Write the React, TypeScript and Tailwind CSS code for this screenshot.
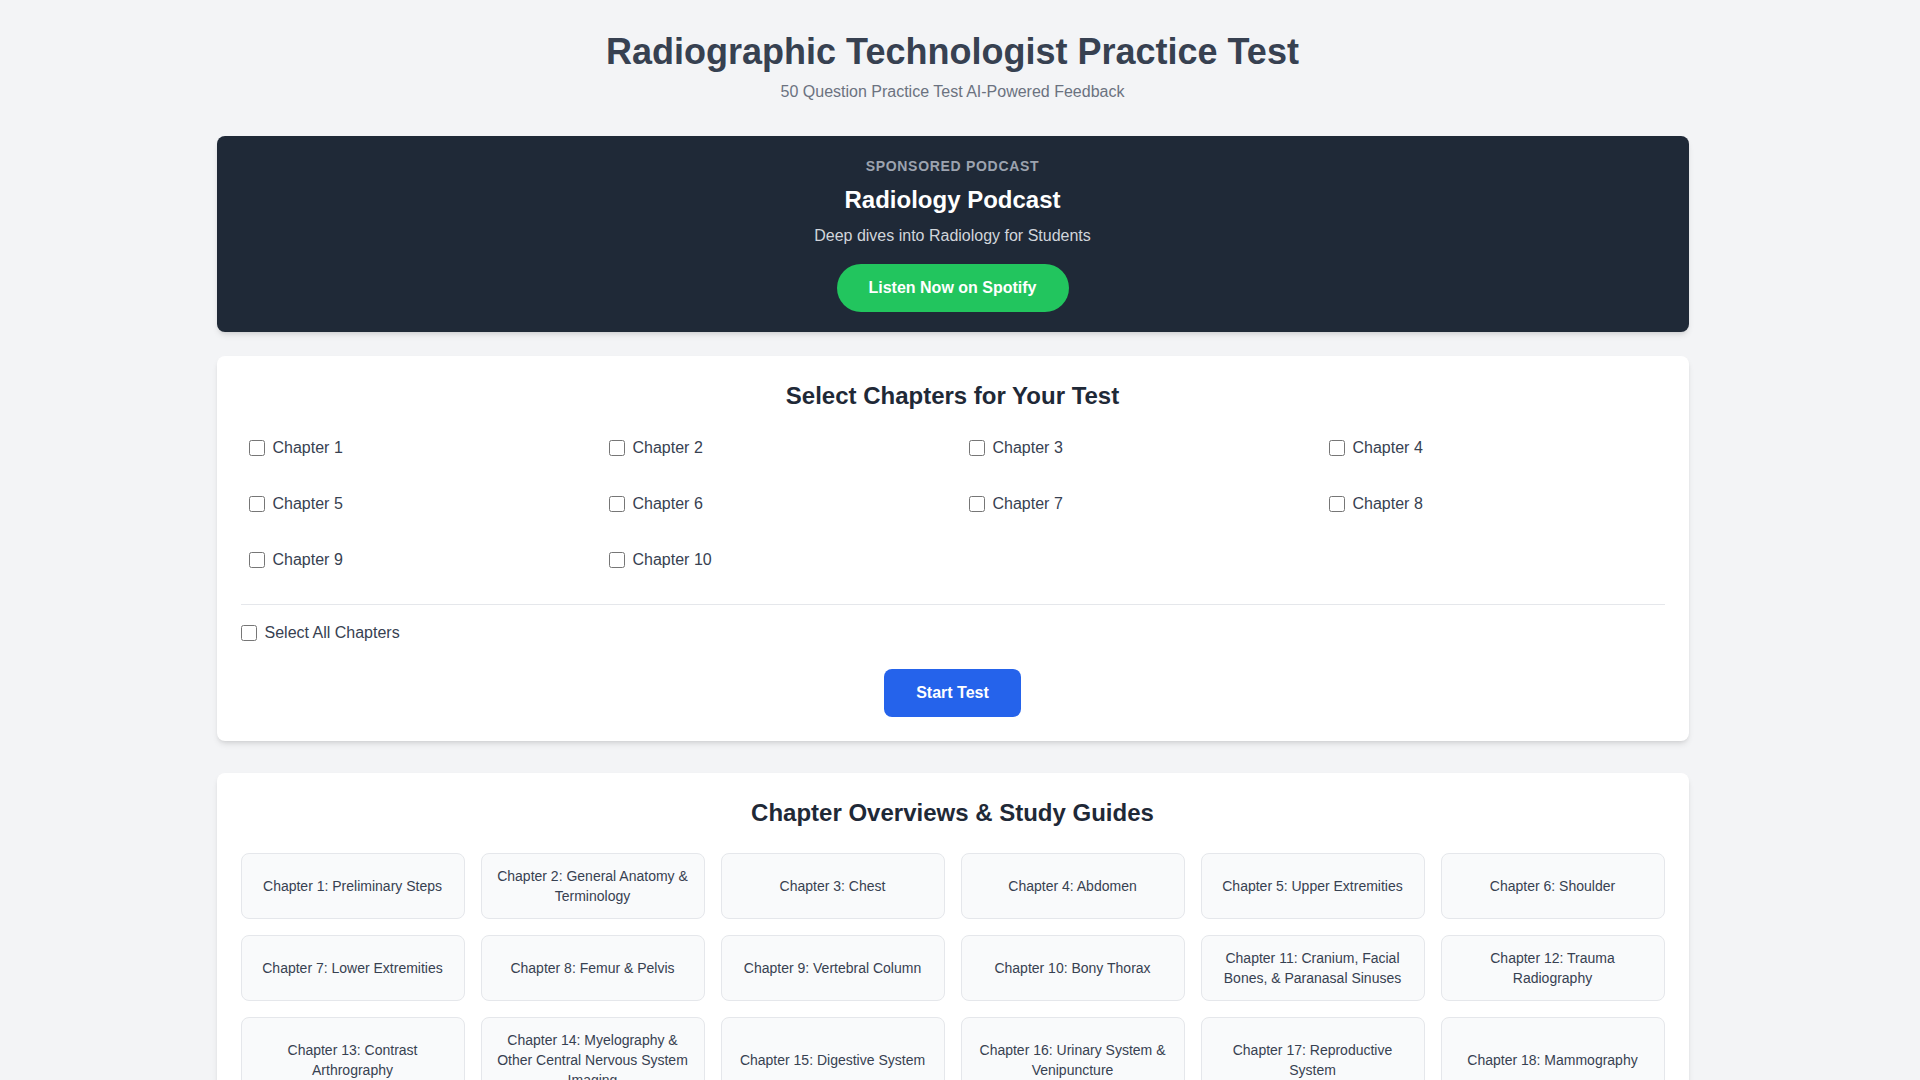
import React, { useState } from 'react';

const selectable = Array.from({ length: 10 }, (_, i) => i + 1);

const guides = [
  'Chapter 1: Preliminary Steps',
  'Chapter 2: General Anatomy & Terminology',
  'Chapter 3: Chest',
  'Chapter 4: Abdomen',
  'Chapter 5: Upper Extremities',
  'Chapter 6: Shoulder',
  'Chapter 7: Lower Extremities',
  'Chapter 8: Femur & Pelvis',
  'Chapter 9: Vertebral Column',
  'Chapter 10: Bony Thorax',
  'Chapter 11: Cranium, Facial Bones, & Paranasal Sinuses',
  'Chapter 12: Trauma Radiography',
  'Chapter 13: Contrast Arthrography',
  'Chapter 14: Myelography & Other Central Nervous System Imaging',
  'Chapter 15: Digestive System',
  'Chapter 16: Urinary System & Venipuncture',
  'Chapter 17: Reproductive System',
  'Chapter 18: Mammography',
];

export default function App() {
  const [picked, setPicked] = useState<number[]>([]);

  const toggle = (n: number) => {
    setPicked(prev => (prev.includes(n) ? prev.filter(p => p !== n) : [...prev, n]));
  };

  const allPicked = picked.length === selectable.length;

  const toggleAll = () => {
    setPicked(allPicked ? [] : [...selectable]);
  };

  return (
    <div className="h-screen overflow-y-scroll bg-[#f3f4f6] pr-[15px] font-['Liberation_Sans',Arial,sans-serif]">
      <div className="container mx-auto px-8 py-8">
        <header className="text-center mb-8">
          <h1 className="text-4xl font-bold text-[#374151] mb-2">Radiographic Technologist Practice Test</h1>
          <p className="text-base text-[#6b7280]">50 Question Practice Test AI-Powered Feedback</p>
        </header>

        {/* Sponsor banner */}
        <div className="bg-[#1f2937] rounded-lg shadow-md px-6 py-5 mb-6 text-center">
          <p className="text-sm font-semibold uppercase tracking-wider text-[#9ca3af] mb-2">Sponsored Podcast</p>
          <h2 className="text-2xl font-bold text-white mb-2">Radiology Podcast</h2>
          <p className="text-base text-[#d1d5db] mb-4">Deep dives into Radiology for Students</p>
          <button className="px-8 py-3 bg-[#22c55e] hover:bg-[#16a34a] text-white font-bold rounded-full transition-colors">
            Listen Now on Spotify
          </button>
        </div>

        {/* Chapter picker */}
        <div className="bg-white rounded-lg shadow-md p-6 mb-8">
          <h2 className="text-2xl font-bold text-[#1f2937] text-center mb-4">Select Chapters for Your Test</h2>
          <div className="grid grid-cols-4 gap-4">
            {selectable.map(n => (
              <label key={n} className="flex items-center p-2 rounded cursor-pointer hover:bg-[#f9fafb]">
                <input
                  type="checkbox"
                  checked={picked.includes(n)}
                  onChange={() => toggle(n)}
                  className="w-4 h-4 mr-2"
                />
                <span className="text-base text-[#374151]">Chapter {n}</span>
              </label>
            ))}
          </div>
          <div className="mt-6 pt-4 border-t border-[#e5e7eb]">
            <label className="flex items-center cursor-pointer">
              <input type="checkbox" checked={allPicked} onChange={toggleAll} className="w-4 h-4 mr-2" />
              <span className="text-base text-[#374151]">Select All Chapters</span>
            </label>
          </div>
          <div className="mt-6 text-center">
            <button className="px-8 py-3 bg-[#2563eb] hover:bg-[#1d4ed8] text-white font-bold rounded-lg transition-colors">
              Start Test
            </button>
          </div>
        </div>

        {/* Study guides */}
        <div className="bg-white rounded-lg shadow-md p-6">
          <h2 className="text-2xl font-bold text-[#1f2937] text-center mb-6">Chapter Overviews &amp; Study Guides</h2>
          <div className="grid grid-cols-6 gap-4">
            {guides.map(g => (
              <a
                key={g}
                href="#"
                className="flex items-center justify-center text-center p-3 bg-[#f9fafb] border border-[#e5e7eb] rounded-lg text-sm text-[#374151] hover:bg-[#f3f4f6] transition-colors"
              >
                {g}
              </a>
            ))}
          </div>
        </div>
      </div>
    </div>
  );
}
